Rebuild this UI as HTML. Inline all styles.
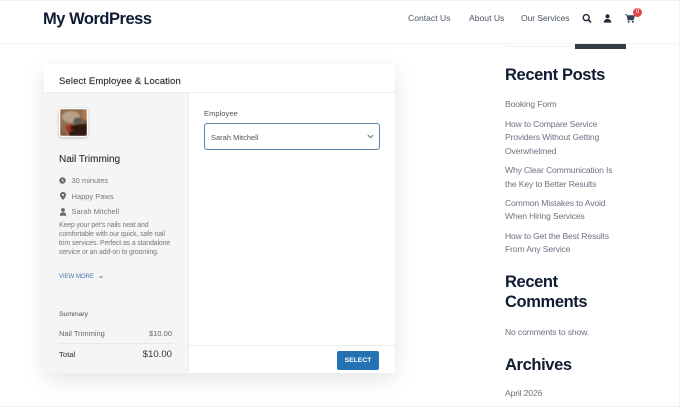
<!DOCTYPE html>
<html><head><meta charset="utf-8"><style>
html,body{margin:0;padding:0;width:680px;height:407px;overflow:hidden;background:#fff;font-family:"Liberation Sans",sans-serif}
.t{position:absolute;white-space:nowrap;line-height:1}
.b{position:absolute}
.n{font-size:8.6px;color:#4b5563;top:14px;letter-spacing:0}
.s{font-size:8.6px;color:#6b7280;left:505px;letter-spacing:-.15px}
.h{font-size:16.5px;font-weight:bold;color:#0f1b33;left:505px;letter-spacing:-.38px}
.m{font-size:7.5px;color:#777;left:71.5px;letter-spacing:0}
.d{font-size:6.9px;color:#777;left:59px;letter-spacing:-.1px}
</style></head><body>
<div class="b" style="left:0;top:0;width:680px;height:1px;background:#f1f1f1"></div>
<div class="b" style="left:0;top:43px;width:680px;height:1px;background:#f3f4f6"></div>
<div class="b" style="left:0;top:406px;width:680px;height:1px;background:#f1f1f1"></div>
<div class="b" style="left:679px;top:0;width:1px;height:407px;background:#f3f3f3"></div>
<div class="t" style="left:43px;top:10.5px;font-size:16.5px;font-weight:bold;color:#0f1b33;letter-spacing:-.48px">My WordPress</div>
<div class="t n" style="left:408px">Contact Us</div>
<div class="t n" style="left:469px">About Us</div>
<div class="t n" style="left:521px;letter-spacing:-.1px">Our Services</div>
<svg class="b" style="left:582px;top:13px" width="10" height="11" viewBox="0 0 10 11"><circle cx="4.2" cy="4.6" r="3" fill="none" stroke="#1f2937" stroke-width="1.4"/><path d="M6.4 6.9L9 9.6" stroke="#1f2937" stroke-width="1.6"/></svg>
<svg class="b" style="left:603px;top:14px" width="9" height="9" viewBox="0 0 9 9"><circle cx="4.5" cy="2.3" r="2.1" fill="#1f2937"/><path d="M.8 8.6C.8 6 2.4 5 4.5 5S8.2 6 8.2 8.6z" fill="#1f2937"/></svg>
<svg class="b" style="left:625px;top:14px" width="10" height="9" viewBox="0 0 10 9"><path d="M0 .6H1.8L3 5.8H8.3L9.6 1.6H2.2" fill="#374151" stroke="#374151" stroke-width=".8"/><circle cx="3.6" cy="7.8" r="1" fill="#374151"/><circle cx="7.8" cy="7.8" r="1" fill="#374151"/></svg>
<div class="b" style="left:633px;top:8px;width:9px;height:9px;border-radius:50%;background:#e04848;color:#fff;font-size:6px;line-height:9px;text-align:center">0</div>
<div class="b" style="left:505px;top:44px;width:65px;height:3px;border:1px solid #eee;border-top:0;box-sizing:border-box;border-radius:0 0 1px 1px"></div>
<div class="b" style="left:575px;top:44px;width:51px;height:5px;background:#343a46"></div>

<div class="b" style="left:44px;top:64px;width:351px;height:309px;background:#fff;border-radius:3px;box-shadow:0 6px 22px rgba(0,0,0,.11);overflow:hidden">
<div class="b" style="left:0;top:28px;width:144px;height:281px;background:#f5f5f5"></div>
<div class="b" style="left:0;top:28px;width:351px;height:1px;background:#ededed"></div>
<div class="b" style="left:144px;top:28px;width:1px;height:281px;background:#eee"></div>
<div class="b" style="left:145px;top:281px;width:206px;height:1px;background:#eee"></div>
</div>
<div class="t" style="left:59px;top:76.5px;font-size:9.5px;color:#2b2f36;letter-spacing:.12px;-webkit-text-stroke:.15px #2b2f36">Select Employee &amp; Location</div>

<div class="b" style="left:59px;top:108px;width:29px;height:29px;background:#fff;border-radius:3px;box-shadow:0 1px 3px rgba(0,0,0,.22)"></div>
<div class="b" style="left:60px;top:109px;width:27px;height:27px;overflow:hidden;border-radius:2px">
<svg style="display:block;filter:blur(.8px)" width="27" height="27" viewBox="0 0 27 27"><rect x="-3" y="-3" width="33" height="33" fill="#7a5238"/><path d="M-3 -3H20L30 3V10L22 12L30 18V30H-3Z" fill="#8f6d50"/><ellipse cx="11" cy="8" rx="9" ry="6" fill="#b7a086"/><ellipse cx="18" cy="12" rx="4.5" ry="3.5" fill="#5f5a52"/><path d="M8 17L30 14V30H10Z" fill="#2c1a10"/><path d="M5 17L12 15L10 20L14 21L8 24Z" fill="#a8351e"/><path d="M-3 19L6 24L9 30H-3Z" fill="#8a5a3c"/><path d="M22 -3H30V12L23 10Z" fill="#b07a50"/></svg></div>

<div class="t" style="left:59px;top:154.5px;font-size:10px;color:#2b2f36;letter-spacing:0;-webkit-text-stroke:.12px #2b2f36">Nail Trimming</div>
<svg class="b" style="left:59px;top:177px" width="7" height="7" viewBox="0 0 7 7"><circle cx="3.5" cy="3.5" r="3.2" fill="#6b6b6b"/><path d="M3.5 1.6V3.6L5 4.5" fill="none" stroke="#f5f5f5" stroke-width=".8"/></svg>
<div class="t m" style="top:177px">30 minutes</div>
<svg class="b" style="left:60px;top:192px" width="6" height="8" viewBox="0 0 6 8"><path d="M3 0C1.3 0 0 1.3 0 3C0 5 3 8 3 8S6 5 6 3C6 1.3 4.7 0 3 0Z" fill="#6b6b6b"/><circle cx="3" cy="3" r="1" fill="#f5f5f5"/></svg>
<div class="t m" style="top:193px">Happy Paws</div>
<svg class="b" style="left:59px;top:208px" width="8" height="8" viewBox="0 0 8 8"><circle cx="4" cy="2" r="1.9" fill="#6b6b6b"/><path d="M.8 7.8C.8 5.3 2 4.4 4 4.4S7.2 5.3 7.2 7.8z" fill="#6b6b6b"/></svg>
<div class="t m" style="top:208px">Sarah Mitchell</div>
<div class="t d" style="top:223px">Keep your pet's nails neat and</div>
<div class="t d" style="top:232px">comfortable with our quick, safe nail</div>
<div class="t d" style="top:241px">trim services. Perfect as a standalone</div>
<div class="t d" style="top:250px">service or an add-on to grooming.</div>
<div class="t" style="left:59px;top:274px;font-size:6px;color:#3f74ad;letter-spacing:0">VIEW MORE</div>
<svg class="b" style="left:97.5px;top:275px" width="6" height="4" viewBox="0 0 6 4"><path d="M1.3 1.2L3 2.8L4.7 1.2" fill="none" stroke="#3f74ad" stroke-width=".7"/></svg>
<div class="t" style="left:59px;top:311.5px;font-size:6.8px;color:#666;letter-spacing:0;-webkit-text-stroke:.1px #666">Summary</div>
<div class="t" style="left:59px;top:329.5px;font-size:7.5px;color:#666;letter-spacing:0">Nail Trimming</div>
<div class="t" style="right:508px;top:329.5px;font-size:7.5px;color:#666;letter-spacing:0">$10.00</div>
<div class="b" style="left:59px;top:343px;width:114px;height:1px;background:#e8e8e8"></div>
<div class="t" style="left:59px;top:351px;font-size:7.6px;color:#444;letter-spacing:.1px;-webkit-text-stroke:.1px #444">Total</div>
<div class="t" style="right:508px;top:349.5px;font-size:9.6px;color:#333;letter-spacing:0">$10.00</div>

<div class="t" style="left:204px;top:110px;font-size:7.6px;color:#555;letter-spacing:0">Employee</div>
<div class="b" style="left:204px;top:123px;width:176px;height:27px;box-sizing:border-box;border:1px solid #5b7fb0;border-radius:3px;background:#fff"></div>
<div class="t" style="left:211px;top:133.5px;font-size:7.5px;color:#555;letter-spacing:0">Sarah Mitchell</div>
<svg class="b" style="left:367px;top:134px" width="7" height="5" viewBox="0 0 7 5"><path d="M.8 1L3.5 3.7L6.2 1" fill="none" stroke="#666" stroke-width=".9"/></svg>
<div class="b" style="left:337px;top:351px;width:42px;height:19px;border-radius:2px;background:#2471b3;color:#fff;font-size:6.8px;font-weight:bold;line-height:20px;text-align:center;letter-spacing:0">SELECT</div>

<div class="t h" style="top:66.5px">Recent Posts</div>
<div class="t s" style="top:99.5px">Booking Form</div>
<div class="t s" style="top:119.5px">How to Compare Service</div>
<div class="t s" style="top:133px">Providers Without Getting</div>
<div class="t s" style="top:146.5px">Overwhelmed</div>
<div class="t s" style="top:165.5px">Why Clear Communication Is</div>
<div class="t s" style="top:179.5px">the Key to Better Results</div>
<div class="t s" style="top:198.5px">Common Mistakes to Avoid</div>
<div class="t s" style="top:212px">When Hiring Services</div>
<div class="t s" style="top:231.5px">How to Get the Best Results</div>
<div class="t s" style="top:245px">From Any Service</div>
<div class="t h" style="top:273.5px">Recent</div>
<div class="t h" style="top:293.5px">Comments</div>
<div class="t s" style="top:327.5px">No comments to show.</div>
<div class="t h" style="top:356.5px">Archives</div>
<div class="t s" style="top:389px">April 2026</div>
</body></html>
